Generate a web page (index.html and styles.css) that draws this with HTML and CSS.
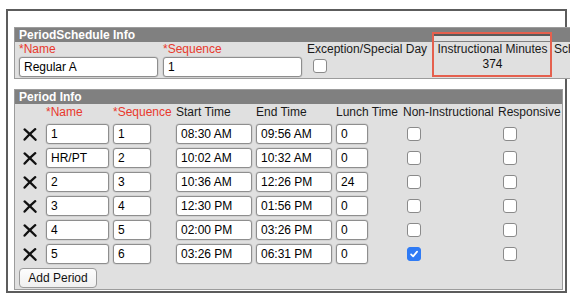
FILE: index.html
```html
<!DOCTYPE html>
<html>
<head>
<meta charset="utf-8">
<link rel="stylesheet" href="styles.css">
</head>
<body>
<div class="frame">
  <div class="panel ps">
    <div class="bar">PeriodSchedule Info</div>
    <div class="ps-grid">
      <div class="lbl req">*Name</div>
      <div class="lbl req">*Sequence</div>
      <div class="lbl">Exception/Special Day</div>
      <div class="lbl center">Instructional Minutes</div>
      <div class="lbl">School</div>
      <div class="field">Regular A</div>
      <div class="field">1</div>
      <div class="cbcell"><span class="cb"></span></div>
      <div class="center val">374</div>
      <div></div>
    </div>
  </div>
  <div class="annot"></div>

  <div class="panel pi">
    <div class="bar">Period Info</div>
    <div class="pi-grid">
      <div></div>
      <div class="lbl req">*Name</div>
      <div class="lbl req">*Sequence</div>
      <div class="lbl">Start Time</div>
      <div class="lbl">End Time</div>
      <div class="lbl">Lunch Time</div>
      <div class="lbl">Non-Instructional</div>
      <div class="lbl">Responsive</div>

      <div class="del"><svg class="x" viewBox="0 0 14 13"><path d="M1.6 1.4 Q7 6.2 12.6 11.8"/><path d="M12.2 1.2 Q6.5 6 1.6 11.6"/></svg></div>
      <div class="field w63">1</div><div class="field w38">1</div><div class="field">08:30 AM</div><div class="field">09:56 AM</div><div class="field w32">0</div>
      <div class="cbcell"><span class="cb"></span></div><div class="cbcell r"><span class="cb"></span></div>

      <div class="del"><svg class="x" viewBox="0 0 14 13"><path d="M1.6 1.4 Q7 6.2 12.6 11.8"/><path d="M12.2 1.2 Q6.5 6 1.6 11.6"/></svg></div>
      <div class="field w63">HR/PT</div><div class="field w38">2</div><div class="field">10:02 AM</div><div class="field">10:32 AM</div><div class="field w32">0</div>
      <div class="cbcell"><span class="cb"></span></div><div class="cbcell r"><span class="cb"></span></div>

      <div class="del"><svg class="x" viewBox="0 0 14 13"><path d="M1.6 1.4 Q7 6.2 12.6 11.8"/><path d="M12.2 1.2 Q6.5 6 1.6 11.6"/></svg></div>
      <div class="field w63">2</div><div class="field w38">3</div><div class="field">10:36 AM</div><div class="field">12:26 PM</div><div class="field w32">24</div>
      <div class="cbcell"><span class="cb"></span></div><div class="cbcell r"><span class="cb"></span></div>

      <div class="del"><svg class="x" viewBox="0 0 14 13"><path d="M1.6 1.4 Q7 6.2 12.6 11.8"/><path d="M12.2 1.2 Q6.5 6 1.6 11.6"/></svg></div>
      <div class="field w63">3</div><div class="field w38">4</div><div class="field">12:30 PM</div><div class="field">01:56 PM</div><div class="field w32">0</div>
      <div class="cbcell"><span class="cb"></span></div><div class="cbcell r"><span class="cb"></span></div>

      <div class="del"><svg class="x" viewBox="0 0 14 13"><path d="M1.6 1.4 Q7 6.2 12.6 11.8"/><path d="M12.2 1.2 Q6.5 6 1.6 11.6"/></svg></div>
      <div class="field w63">4</div><div class="field w38">5</div><div class="field">02:00 PM</div><div class="field">03:26 PM</div><div class="field w32">0</div>
      <div class="cbcell"><span class="cb"></span></div><div class="cbcell r"><span class="cb"></span></div>

      <div class="del"><svg class="x" viewBox="0 0 14 13"><path d="M1.6 1.4 Q7 6.2 12.6 11.8"/><path d="M12.2 1.2 Q6.5 6 1.6 11.6"/></svg></div>
      <div class="field w63">5</div><div class="field w38">6</div><div class="field">03:26 PM</div><div class="field">06:31 PM</div><div class="field w32">0</div>
      <div class="cbcell"><span class="cb checked"><svg viewBox="0 0 14 14"><path d="M3.6 7.4 L6 9.8 L10.6 4.2"/></svg></span></div><div class="cbcell r"><span class="cb"></span></div>
    </div>
    <div class="addrow"><button class="btn">Add Period</button></div>
  </div>
</div>
</body>
</html>
```
FILE: styles.css
```css
html, body {
  margin: 0;
  padding: 0;
  overflow: hidden;
  background: #fff;
}
body {
  font-family: "Liberation Sans", Arial, sans-serif;
  font-size: 12px;
  color: #111;
}
.frame {
  position: relative;
  margin: 9px 0 0 6px;
  width: 549px;
  border: 2px solid #5c5c5c;
  padding: 16px 2px 1px 6px;
}
.panel {
  border: 1px solid #9c9c9c;
  background: #e0e0e0;
}
.ps {
  width: 620px;
}
.pi {
  margin-top: 10px;
}
.bar {
  height: 14px;
  line-height: 14px;
  background: #808080;
  color: #fff;
  font-weight: bold;
  padding-left: 4px;
  white-space: nowrap;
}
.lbl {
  white-space: nowrap;
  color: #1a1a1a;
}
.lbl.req {
  color: #e8392d;
}
.center {
  text-align: center;
}
.ps-grid {
  display: grid;
  grid-template-columns: 139px 139px 124px 113px auto;
  grid-template-rows: 14px 20px;
  column-gap: 5px;
  row-gap: 1px;
  padding: 0 0 1px 4px;
}
.ps-grid .lbl {
  line-height: 14px;
}
.val {
  line-height: 12px;
  padding-top: 1px;
  color: #111;
}
.field {
  box-sizing: border-box;
  height: 20px;
  line-height: 18px;
  border: 1px solid #8e8e8e;
  border-radius: 3px;
  background: #fff;
  padding: 0 4px;
  color: #000;
  white-space: nowrap;
  box-shadow: 0 0 0 0.5px #c4c4c4;
}
.w63 { width: 63px; }
.w38 { width: 38px; }
.w32 { width: 32px; }
.cbcell {
  display: flex;
  align-items: center;
  padding-left: 4px;
}
.cbcell.r {
  padding-left: 5px;
}
.ps-grid .cbcell {
  align-items: flex-start;
  padding-top: 2px;
  padding-left: 6px;
}
.cb {
  display: block;
  width: 14px;
  height: 14px;
  box-sizing: border-box;
  border: 1px solid #8a8a8a;
  border-radius: 3px;
  background: #fff;
}
.cb.checked {
  background: #2f7bf5;
  border-color: #2f7bf5;
}
.cb.checked svg {
  display: block;
  width: 12px;
  height: 12px;
  fill: none;
  stroke: #fff;
  stroke-width: 2;
  stroke-linecap: round;
  stroke-linejoin: round;
}
.pi-grid {
  display: grid;
  grid-template-columns: 23px 63px 59px 76px 76px 63px 91px 63px;
  grid-template-rows: 16px repeat(6, 20px);
  column-gap: 4px;
  row-gap: 4px;
  padding-left: 4px;
}
.pi-grid .lbl {
  line-height: 16px;
}
.del {
  display: flex;
  align-items: center;
  justify-content: center;
  padding-right: 1px;
}
.x {
  width: 14px;
  height: 13px;
  fill: none;
  stroke: #111;
  stroke-width: 2.3;
  stroke-linecap: round;
}
.addrow {
  padding: 4px 0 1px 4px;
}
.btn {
  display: block;
  box-sizing: border-box;
  width: 78px;
  height: 20px;
  padding: 0;
  border: 1px solid #9a9a9a;
  border-radius: 4px;
  background: linear-gradient(#fdfdfd, #f0f0f0);
  font-family: "Liberation Sans", Arial, sans-serif;
  font-size: 12px;
  color: #111;
}
.annot {
  position: absolute;
  left: 424px;
  top: 21px;
  width: 120px;
  height: 45px;
  box-sizing: border-box;
  border: 2px solid #e5604e;
  background: linear-gradient(#5a5a5a 0 2px, #e0e0e0 2px 7px, transparent 7px);
  pointer-events: none;
}
```
